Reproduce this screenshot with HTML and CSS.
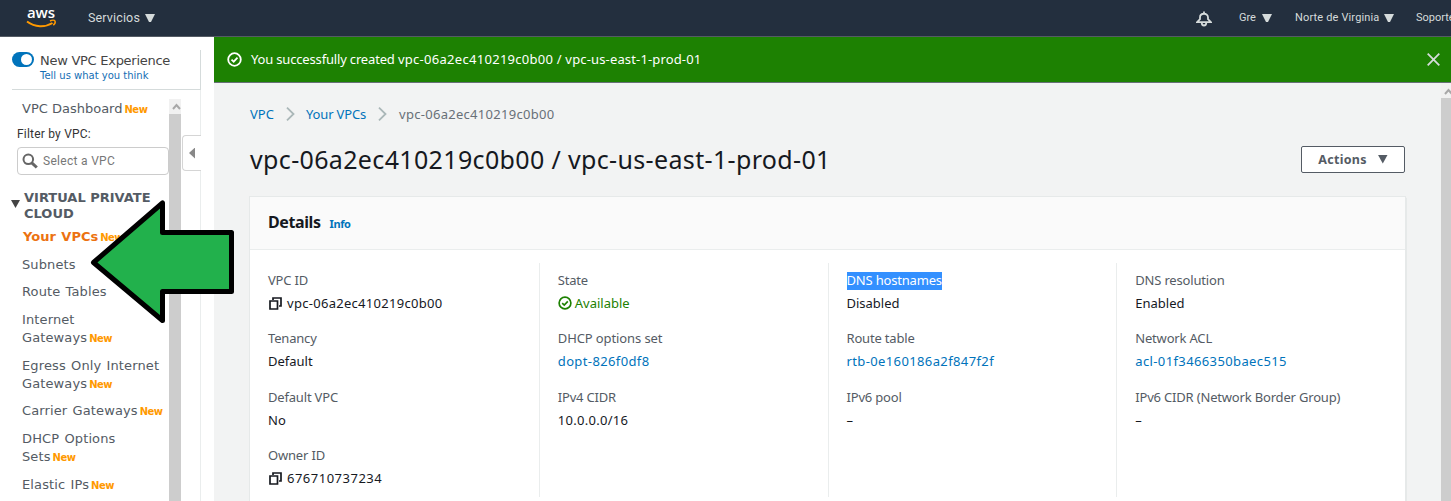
FILE: index.html
```html
<!DOCTYPE html>
<html lang="en">
<head>
<meta charset="utf-8">
<title>VPC details</title>
<link rel="stylesheet" href="styles.css">
</head>
<body>
<header class="topbar">
  <svg class="logo" width="32" height="24" viewBox="0 0 32 24">
    <text x="1" y="12" class="logo-text" textLength="28">aws</text>
    <path d="M1 15.500C9 21.500 19 21.500 26.500 17" fill="none" stroke="#f90" stroke-width="2"/>
    <path d="M24 15c2-.9 4.500-.9 5 0s-.4 3-1.700 4.200" fill="none" stroke="#f90" stroke-width="1.500"/>
  </svg>
  <span class="services">Servicios</span><i class="caret"></i>
  <span class="spacer"></span>
  <svg class="bell" width="16" height="17" viewBox="0 0 16 17" fill="none" stroke="#d5dbdb" stroke-width="1.800">
    <path d="M8 0.500v2M1 11.200h14L12 8.200V6.500C12 1.500 4 1.500 4 6.500v1.700ZM5.700 11.500a2.300 3 0 0 0 4.600 0"/>
  </svg>
  <span class="nav user">Gre</span><i class="caret"></i>
  <span class="nav region">Norte de Virginia</span><i class="caret"></i>
  <span class="nav support">Soporte</span>
</header>
<div class="shell">
  <aside class="sidebar">
    <div class="experience">
      <span class="toggle"><i></i></span>
      <div><div class="exp-title">New VPC Experience</div><div class="exp-link">Tell us what you think</div></div>
    </div>
    <div class="side-body">
      <nav class="menu">
        <a class="dash">VPC Dashboard<b>New</b></a>
        <label class="filter-label">Filter by VPC:</label>
        <div class="filter">
          <svg width="16" height="16" viewBox="0 0 16 16" fill="none" stroke="#666"><circle cx="6.300" cy="6.300" r="4.800" stroke-width="2"/><path d="M9.800 9.800l5 4.700" stroke-width="3"/></svg>
          <span>Select a VPC</span>
        </div>
        <div class="group"><i class="group-caret"></i><span>VIRTUAL PRIVATE CLOUD</span></div>
        <div class="items">
          <a class="active">Your VPCs<b>New</b></a>
          <a>Subnets</a>
          <a>Route Tables</a>
          <a>Internet<br>Gateways<b>New</b></a>
          <a>Egress Only Internet<br>Gateways<b>New</b></a>
          <a>Carrier Gateways<b>New</b></a>
          <a>DHCP Options<br>Sets<b>New</b></a>
          <a>Elastic IPs<b>New</b></a>
        </div>
      </nav>
      <div class="side-scroll"><svg width="12" height="15" viewBox="0 0 12 15" fill="none" stroke="#a8a8a8" stroke-width="2"><path d="M4 10l3.500-4L11 10"/></svg></div>
      <div class="collapse"><i></i></div>
    </div>
  </aside>
  <main class="main">
    <div class="banner">
      <svg width="15" height="15" viewBox="0 0 15 15" fill="none" stroke="#fff" stroke-width="1.800"><circle cx="7.500" cy="7.500" r="6.300"/><path d="M4.500 7.700l2.200 2 3.800-4"/></svg>
      <p><span class="tight">You successfully created </span><span class="id">vpc-06a2ec410219c0b00</span> / vpc-us-east-1-prod-01</p>
      <svg class="close" width="13" height="13" viewBox="0 0 13 13" stroke="#d5dbdb" stroke-width="1.800"><path d="M.7.700l11.600 11.600M12.300.7L.7 12.300"/></svg>
    </div>
    <div class="content">
      <div class="page">
        <div class="crumbs">
          <a class="c1">VPC</a>
          <svg width="9" height="14" viewBox="0 0 9 14" fill="none" stroke="#aab7b8" stroke-width="1.800"><path d="M1 .7l6.500 6.300L1 13.300"/></svg>
          <a class="c2">Your VPCs</a>
          <svg width="9" height="14" viewBox="0 0 9 14" fill="none" stroke="#aab7b8" stroke-width="1.800"><path d="M1 .7l6.500 6.300L1 13.300"/></svg>
          <span class="c3 id">vpc-06a2ec410219c0b00</span>
        </div>
        <div class="heading">
          <h1>vpc-06a2ec410219c0b00 / vpc-us-east-1-prod-01</h1>
          <button class="actions">Actions<i></i></button>
        </div>
        <section class="card">
          <div class="card-head"><h2>Details</h2><a>Info</a></div>
          <div class="grid">
            <dl>
              <dt>VPC ID</dt><dd><svg class="copy" width="13" height="13" viewBox="0 0 13 13" fill="none" stroke="#16191f" stroke-width="1.700"><path d="M4 3V1h8v8h-2M1 4h7.500v8H1z"/></svg><span class="id">vpc-06a2ec410219c0b00</span></dd>
              <dt>Tenancy</dt><dd>Default</dd>
              <dt>Default VPC</dt><dd>No</dd>
              <dt>Owner ID</dt><dd><svg class="copy" width="13" height="13" viewBox="0 0 13 13" fill="none" stroke="#16191f" stroke-width="1.700"><path d="M4 3V1h8v8h-2M1 4h7.500v8H1z"/></svg><span class="id wide">676710737234</span></dd>
            </dl>
            <dl>
              <dt>State</dt><dd class="ok"><svg width="14" height="14" viewBox="0 0 15 15" fill="none" stroke="#1d8102" stroke-width="1.800"><circle cx="7.500" cy="7.500" r="6.300"/><path d="M4.500 7.700l2.200 2 3.800-4"/></svg><span>Available</span></dd>
              <dt class="wide-label">DHCP options set</dt><dd><a>dopt-826f0df8</a></dd>
              <dt>IPv4 CIDR</dt><dd><span class="id">10.0.0.0/16</span></dd>
            </dl>
            <dl>
              <dt><mark>DNS hostnames</mark></dt><dd>Disabled</dd>
              <dt>Route table</dt><dd><a>rtb-0e160186a2f847f2f</a></dd>
              <dt>IPv6 pool</dt><dd>–</dd>
            </dl>
            <dl>
              <dt>DNS resolution</dt><dd>Enabled</dd>
              <dt>Network ACL</dt><dd><a>acl-01f3466350baec515</a></dd>
              <dt>IPv6 CIDR (Network Border Group)</dt><dd>–</dd>
            </dl>
          </div>
        </section>
      </div>
      <div class="main-scroll"><svg width="10" height="15" viewBox="0 0 10 15" fill="none" stroke="#a8a8a8" stroke-width="2"><path d="M4 10l3.500-4L11 10"/></svg></div>
    </div>
  </main>
</div>
<svg class="arrow" width="146" height="128" viewBox="0 0 146 128"><path d="M4.500 63.500L73.500 4V33.500H142.500V92.500H73.500V121.500Z"/></svg>
</body>
</html>
```
FILE: styles.css
```css
* { box-sizing: border-box; }
body { margin: 0; width: 1451px; height: 501px; overflow: hidden; display: flex; flex-direction: column; background: #fff; font: 13px/22px "Noto Sans", sans-serif; color: #16191f; }
a { color: #0073bb; }

.topbar { height: 37px; flex: none; display: flex; align-items: center; background: #232f3e; border-bottom: 1px solid #545b64; color: #d5dbdb; font-family: Roboto, sans-serif; overflow: hidden; white-space: nowrap; }
.logo { margin-left: 26px; flex: none; overflow: visible; }
.logo-text { font: 600 15px "Open Sans", sans-serif; fill: #fff; }
.services { margin-left: 30px; width: 53px; font-size: 12.500px; letter-spacing: .15px; }
.caret { width: 10px; height: 8px; margin-left: 4px; background: #d5dbdb; clip-path: polygon(0 0, 100% 0, 60% 100%, 40% 100%); flex: none; }
.spacer { flex: 1; }
.bell { margin-right: 27px; position: relative; top: 1px; }
.nav { font-size: 11px; flex: none; }
.user { width: 19px; }
.region { width: 85px; margin-left: 23px; letter-spacing: .15px; }
.support { width: 35px; margin-left: 22px; overflow: hidden; }

.shell { flex: 1; display: flex; min-height: 0; }
.sidebar { width: 214px; flex: none; padding: 13px 13px 0 12px; display: flex; flex-direction: column; font-family: "DejaVu Sans", sans-serif; }
.experience { height: 40px; flex: none; display: flex; border: solid #d5dbdb; border-width: 0 1px 1px 0; }
.toggle { width: 22px; height: 15px; margin: 2px 6px 0 0; padding: 2px; border-radius: 8px; background: #0073bb; display: flex; justify-content: flex-end; }
.toggle i { width: 11px; height: 11px; border-radius: 50%; background: #fff; }
.exp-title { font-size: 13px; line-height: 19px; color: #444; letter-spacing: -.27px; padding-top: 1px; white-space: nowrap; }
.exp-link { font-size: 10px; line-height: 11px; color: #146eb4; }
.side-body { flex: 1; min-height: 0; display: flex; position: relative; border-right: 1px solid #eaeded; padding-top: 9px; }
.menu { width: 157px; flex: none; color: #545b64; font-size: 13px; line-height: 18px; }
.menu a { color: #545b64; display: block; white-space: nowrap; }
.menu b { font-size: 10px; line-height: 0; color: #f90; margin-left: 2px; letter-spacing: -.5px; word-spacing: 0; }
.menu .dash { margin-left: 10px; padding-top: 1px; }
.filter-label { display: block; margin: 7px 0 0 5px; font: 12px/18px Roboto, sans-serif; letter-spacing: .2px; color: #333; }
.filter { margin: 4px 0 0 5px; height: 28px; border: 1px solid #ccc; border-radius: 4px; display: flex; align-items: center; padding-left: 4px; font: 12px Roboto, sans-serif; color: #777; }
.filter span { margin-left: 5px; letter-spacing: .3px; }
.group { display: flex; margin-top: 15px; font-weight: bold; line-height: 16px; }
.group-caret { width: 9px; height: 8px; margin: 10px 4px 0 -1px; background: #444; clip-path: polygon(0 0, 100% 0, 50% 100%); flex: none; }
.items { display: grid; row-gap: 9.700px; margin: 6px 0 0 10px; letter-spacing: .12px; word-spacing: 1px; }
.menu .active { color: #ec7211; font-weight: bold; margin-left: 1px; letter-spacing: 0; }
.side-scroll { width: 12px; flex: none; background: linear-gradient(#f1f1f1 15px, #cdcdcd 15px); }
.collapse { position: absolute; right: -1px; top: 45px; width: 19px; height: 36px; border: 1px solid #d5d5d5; border-right: 0; border-radius: 4px 0 0 4px; background: #fff; display: flex; align-items: center; padding-left: 6px; }
.collapse i { width: 6px; height: 11px; background: #888; clip-path: polygon(100% 0, 100% 100%, 0 50%); }

.main { flex: 1; min-width: 0; display: flex; flex-direction: column; }
.banner { height: 46px; flex: none; background: #1d8102; border-bottom: 1px solid #687078; color: #fff; display: flex; align-items: center; padding: 0 11px 0 13px; }
.banner p { margin: 0 0 2px 9px; white-space: nowrap; letter-spacing: .15px; }
.banner .tight { letter-spacing: -.17px; }
.id, .banner .id { letter-spacing: .29px; }
.wide { letter-spacing: .5px; }
.close { margin-left: auto; }
.content { flex: 1; min-height: 0; display: flex; background: #f2f3f3; }
.page { flex: 1; padding: 20px 36px 0; overflow: hidden; }
.crumbs { height: 22px; display: flex; align-items: center; white-space: nowrap; }
.c1 { width: 36px; }
.c2 { margin-left: 11px; width: 72px; letter-spacing: -.15px; }
.c3 { margin-left: 12px; color: #687078; }
.heading { display: flex; align-items: center; justify-content: space-between; height: 68px; }
h1 { margin: 0; font-size: 25px; line-height: 32px; letter-spacing: .35px; font-weight: 400; white-space: nowrap; }
.actions { width: 104px; height: 27px; border: 1px solid #545b64; border-radius: 2px; background: #fff; color: #545b64; font: bold 12.500px "Noto Sans", sans-serif; letter-spacing: .3px; display: flex; align-items: center; justify-content: center; padding: 0; }
.actions i { width: 10px; height: 9px; margin-left: 11px; background: #545b64; clip-path: polygon(0 0, 100% 0, 50% 100%); }
.card { height: 305px; margin-top: 4px; background: #fff; box-shadow: 0 0 0 1px #e6e9e9, 1px 1px 1px #aab7b8; }
.card-head { height: 53px; background: #fafafa; border-bottom: 1px solid #eaeded; padding: 0 18px; display: flex; align-items: center; }
h2 { margin: 0 9px 2px 0; font-size: 16px; letter-spacing: -.4px; }
.card-head a { font-size: 11px; font-weight: bold; padding-top: 2px; letter-spacing: -.4px; }
.grid { display: grid; grid-template-columns: repeat(4, 1fr); margin-top: 13px; height: 234px; }
dl { margin: 0; padding: 7px 0 0 18px; border-left: 1px solid #eaeded; white-space: nowrap; }
dl:first-child { border-color: transparent; padding-left: 17px; }
dt { color: #545b64; height: 22px; line-height: 21px; letter-spacing: -.18px; }
.wide-label { letter-spacing: -.1px; }
dd { margin: 0 0 14.400px; height: 22px; display: flex; align-items: center; }
dd:last-child { margin: 0; }
dd a { letter-spacing: .38px; }
dd svg { margin-right: 3px; flex: none; }
.copy { margin: 0 5px 0 1px; }
.ok { color: #1d8102; }
mark { display: inline-block; height: 18px; line-height: 17px; background: #3390ff; color: #fff; }
.arrow { position: absolute; left: 89px; top: 199px; fill: #22b14c; stroke: #000; stroke-width: 5; stroke-linejoin: round; }
.main-scroll { width: 10px; flex: none; background: linear-gradient(#f1f1f1 15px, #cdcdcd 15px); }
```
